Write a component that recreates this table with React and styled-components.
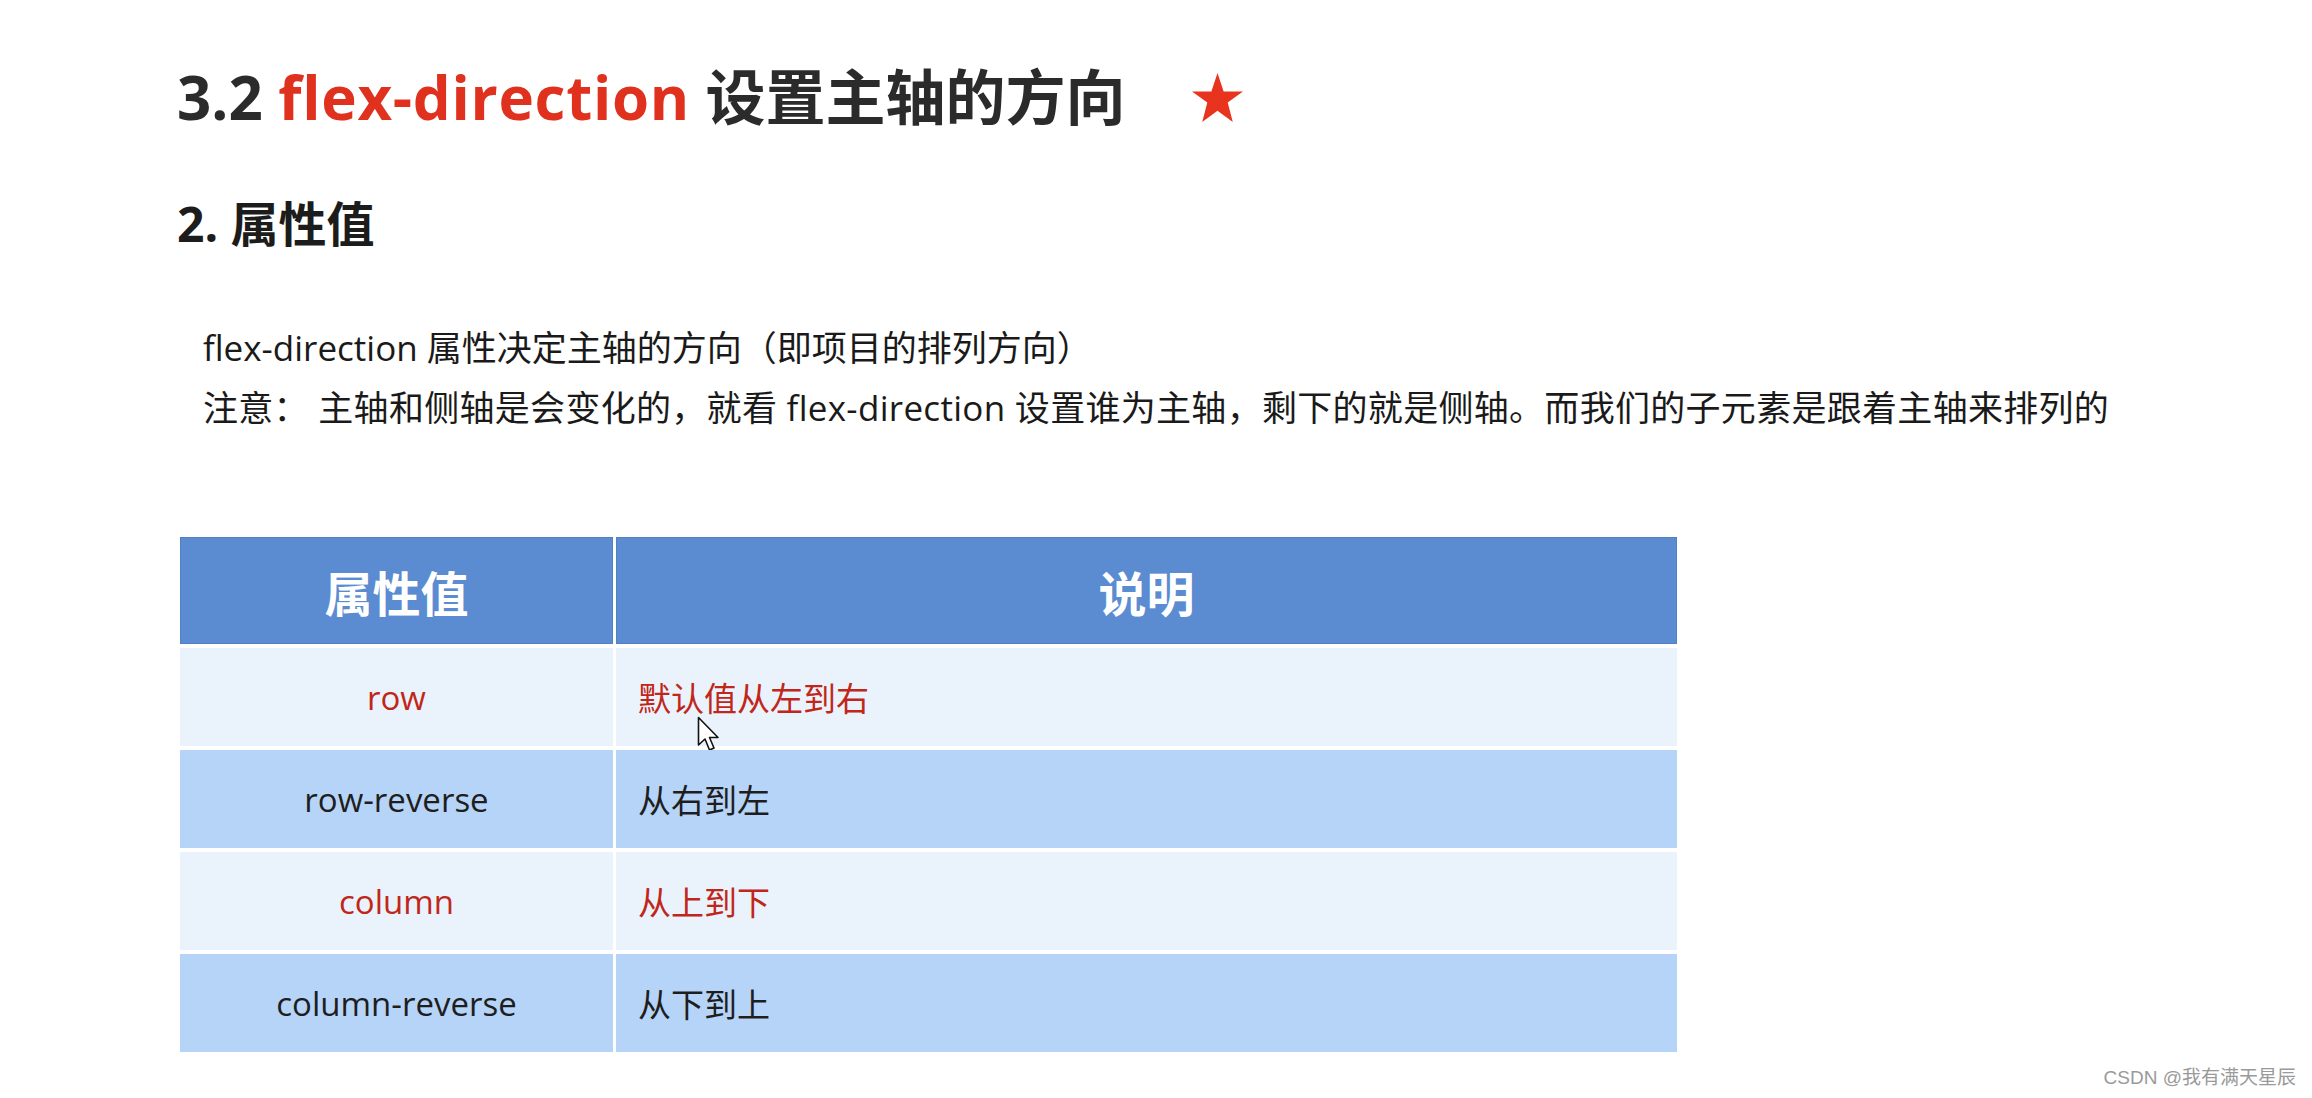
import React from "react";
import styled, { createGlobalStyle } from "styled-components";

const GlobalStyle = createGlobalStyle`
  html, body {
    margin: 0;
    padding: 0;
    background: #ffffff;
  }
  body {
    font-family: "Open Sans", "Noto Sans CJK SC", sans-serif;
    color: #222;
  }
`;

const Page = styled.div`
  width: 2312px;
  height: 1098px;
  box-sizing: border-box;
  padding: 0 16px 0 177px;
  display: flex;
  flex-direction: column;
  overflow: hidden;
`;

const Title = styled.h1`
  margin: 62px 0 0;
  display: flex;
  align-items: center;
  font-size: 60px;
  line-height: 70px;
  font-weight: 700;
  color: #2b2b2b;
  white-space: nowrap;
`;

const Red = styled.span`
  color: ${props => props.color || "#e0301e"};
  margin: 0 0.26em;
  letter-spacing: 0.7px;
`;

const Star = styled.svg`
  width: 53px;
  height: 51px;
  margin-left: 66px;
`;

const SubTitle = styled.h2`
  margin: 62px 0 0;
  font-size: 48px;
  line-height: 60px;
  font-weight: 700;
  color: #1c1c1c;
`;

const Paragraph = styled.div`
  margin-top: 64px;
  padding-left: 26px;
  font-size: 35px;
  line-height: 60px;
  color: #1a1a1a;
`;

const Line = styled.div`
  white-space: nowrap;
  letter-spacing: ${props => props.$spacing || 0}px;
`;

const Table = styled.div`
  margin: 99px 0 0 3px;
  width: 1497px;
  display: grid;
  grid-template-columns: 433px 1fr;
  grid-template-rows: 107px repeat(4, 98px);
  column-gap: 3px;
  row-gap: 4px;
`;

const HeadCell = styled.div`
  background: #5b8bd0;
  box-shadow: inset 0 0 0 1px #5280c6;
  color: #ffffff;
  font-size: 48px;
  font-weight: 700;
  display: flex;
  align-items: center;
  justify-content: center;
`;

const Cell = styled.div`
  position: relative;
  background: ${props => (props.$dark ? "#b6d4f8" : "#eaf3fc")};
  color: ${props => (props.$red ? "#c1261a" : "#1e1e1e")};
  font-size: 33px;
  display: flex;
  align-items: center;
  justify-content: ${props => (props.$center ? "center" : "flex-start")};
  padding-left: ${props => (props.$center ? "0" : "22px")};
`;

const Cursor = styled.svg`
  position: absolute;
  left: 81px;
  top: 68px;
  width: 25px;
  height: 38px;
`;

const Footer = styled.div`
  margin-top: 14px;
  display: flex;
  justify-content: flex-end;
  font-size: 19px;
  line-height: 24px;
  color: #9a9a9a;
  font-family: "Liberation Sans", "Noto Sans CJK SC", sans-serif;
`;

const rows = [
  { value: "row", desc: "默认值从左到右", red: true, cursor: true },
  { value: "row-reverse", desc: "从右到左", dark: true },
  { value: "column", desc: "从上到下", red: true },
  { value: "column-reverse", desc: "从下到上", dark: true }
];

const App = () => {
  return (
    <Page>
      <GlobalStyle />
      <Title>
        3.2<Red>flex-direction</Red>设置主轴的方向
        <Star viewBox="0 0 52 50">
          <polygon
            points="26,1 32,19 51,19 36,30 41,49 26,38 11,49 16,30 1,19 20,19"
            fill="#e8341f"
          />
        </Star>
      </Title>
      <SubTitle>2. 属性值</SubTitle>
      <Paragraph>
        <Line>flex-direction 属性决定主轴的方向（即项目的排列方向）</Line>
        <Line $spacing={0.3}>
          注意： 主轴和侧轴是会变化的，就看 flex-direction
          设置谁为主轴，剩下的就是侧轴。而我们的子元素是跟着主轴来排列的
        </Line>
      </Paragraph>
      <Table>
        <HeadCell>属性值</HeadCell>
        <HeadCell>说明</HeadCell>
        {rows.map(row => (
          <React.Fragment key={row.value}>
            <Cell $dark={row.dark} $red={row.red} $center>
              {row.value}
            </Cell>
            <Cell $dark={row.dark} $red={row.red}>
              {row.desc}
              {row.cursor && (
                <Cursor viewBox="0 0 25 38">
                  <path
                    d="M1.5 1.5 L1.5 29 L8 23 L12.5 34 L17 32 L12.5 21.5 L21 21.5 Z"
                    fill="#ffffff"
                    stroke="#111111"
                    strokeWidth="1.6"
                    strokeLinejoin="round"
                  />
                </Cursor>
              )}
            </Cell>
          </React.Fragment>
        ))}
      </Table>
      <Footer>CSDN @我有满天星辰</Footer>
    </Page>
  );
};

export default App;
